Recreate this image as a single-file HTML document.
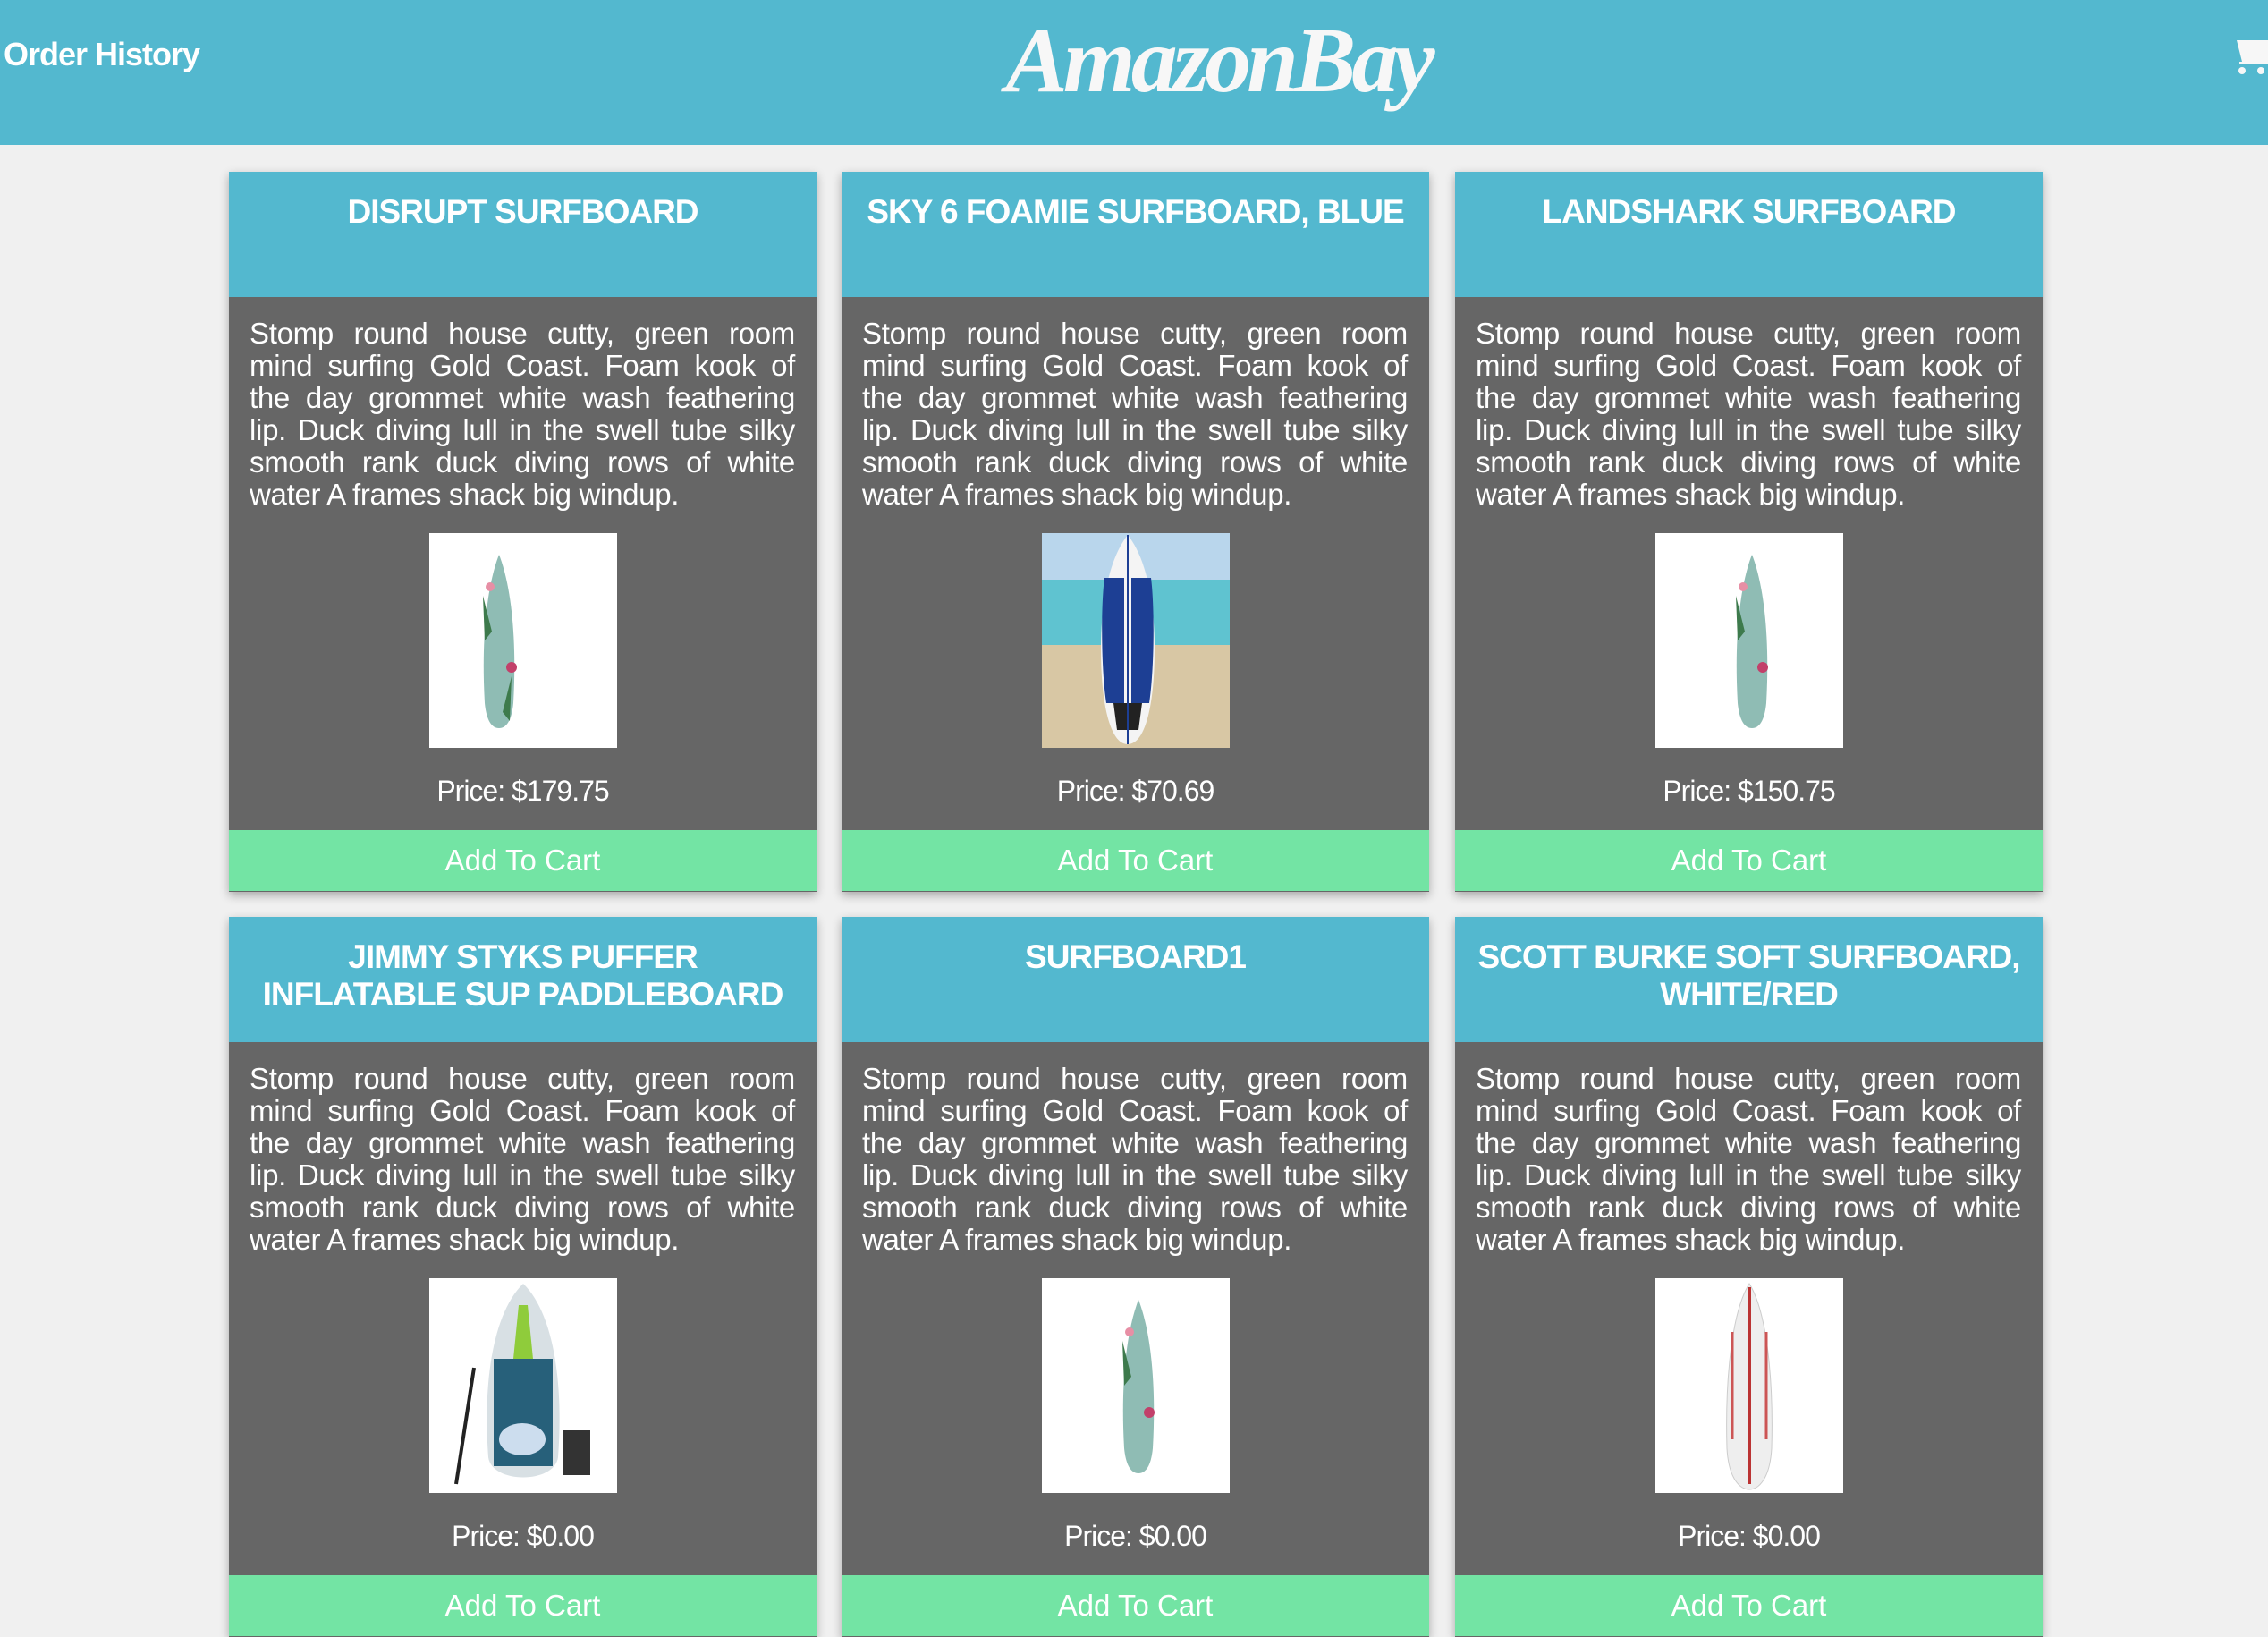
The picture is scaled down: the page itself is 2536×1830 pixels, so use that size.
<!DOCTYPE html>
<html><head><meta charset="utf-8"><style>
*{margin:0;padding:0;box-sizing:border-box}
body{width:2536px;height:1692px;overflow:hidden;background:#f0f0f0;font-family:"Liberation Sans",sans-serif;position:relative}
.hdr{position:absolute;left:0;top:0;width:2536px;height:162px;background:#53b8cf}
.oh{position:absolute;left:4px;top:40px;color:#fff;font-weight:bold;font-size:36px;letter-spacing:-1px}
.logo{position:absolute;left:1100px;top:8px;width:524px;text-align:center;color:#f7f7f7;font-family:"Liberation Serif",serif;font-style:italic;font-weight:bold;font-size:104px;letter-spacing:-5px}
.card{position:absolute;width:657px;height:805px;background:#666;box-shadow:0 4px 10px rgba(0,0,0,.3)}
.t{height:140px;background:#53b8cf;color:#fff;font-weight:bold;font-size:37px;text-align:center;padding:24px 0 0;line-height:42px;letter-spacing:-1px;white-space:nowrap}
.d{color:#fff;font-size:33px;line-height:36px;text-align:justify;padding:23px 24px 0 23px;height:264px;letter-spacing:-0.3px}
.im{display:block;margin:0 auto;width:210px;height:240px;background:#fff}
.p{color:#fff;font-size:32px;text-align:center;margin-top:30px;height:62px;letter-spacing:-1px}
.b{height:68px;background:#73e4a4;color:#fff;font-size:33px;text-align:center;line-height:68px}
</style></head><body>
<div class="hdr">
<div class="oh">Order History</div>
<div class="logo">AmazonBay</div>
<svg style="position:absolute;left:2488px;top:42px" width="48" height="44" viewBox="0 0 48 44"><path d="M3 3h10l6 24h29v-4H22L18 9h30V3" fill="#f7f7f7"/><path d="M16 6h32v17l-26 4z" fill="#f7f7f7"/><rect x="16" y="27" width="32" height="3" fill="#f7f7f7"/><circle cx="19" cy="37" r="4" fill="#f7f7f7"/><circle cx="40" cy="37" r="4" fill="#f7f7f7"/></svg>
</div>

<div class="card" style="left:256px;top:192px"><div class="t">DISRUPT SURFBOARD</div><div class="d">Stomp round house cutty, green room mind surfing Gold Coast. Foam kook of the day grommet white wash feathering lip. Duck diving lull in the swell tube silky smooth rank duck diving rows of white water A frames shack big windup.</div>
<svg class="im" viewBox="0 0 210 240"><rect width="210" height="240" fill="#fff"/><path d="M78 24C64 60 58 120 62 190C64 210 70 218 78 218C86 218 92 210 94 190C98 120 92 60 78 24z" fill="#8fbcb4"/><circle cx="68" cy="60" r="5" fill="#e78fa5"/><circle cx="92" cy="150" r="6" fill="#c2406a"/><path d="M60 70l10 40-8 10z" fill="#3d7a4c"/><path d="M92 160l-10 40 8 10z" fill="#3d7a4c"/></svg>
<div class="p">Price: $179.75</div><div class="b">Add To Cart</div></div>

<div class="card" style="left:941px;top:192px"><div class="t">SKY 6 FOAMIE SURFBOARD, BLUE</div><div class="d">Stomp round house cutty, green room mind surfing Gold Coast. Foam kook of the day grommet white wash feathering lip. Duck diving lull in the swell tube silky smooth rank duck diving rows of white water A frames shack big windup.</div>
<svg class="im" viewBox="0 0 210 240"><rect width="210" height="60" fill="#b9d6ec"/><rect y="52" width="210" height="75" fill="#5fc3d0"/><rect y="125" width="210" height="115" fill="#d8c7a4"/><path d="M96 2C74 30 66 80 66 130C66 190 76 236 96 236C116 236 126 190 126 130C126 80 118 30 96 2z" fill="#f4f4f4"/><path d="M70 50C66 80 66 150 72 190L92 190V50zM122 50C126 80 126 150 120 190L100 190V50z" fill="#1d3f94"/><path d="M80 190h32l-4 30h-24z" fill="#222"/><rect x="95" y="2" width="2" height="234" fill="#1d3f94"/></svg>
<div class="p">Price: $70.69</div><div class="b">Add To Cart</div></div>

<div class="card" style="left:1627px;top:192px"><div class="t">LANDSHARK SURFBOARD</div><div class="d">Stomp round house cutty, green room mind surfing Gold Coast. Foam kook of the day grommet white wash feathering lip. Duck diving lull in the swell tube silky smooth rank duck diving rows of white water A frames shack big windup.</div>
<svg class="im" viewBox="0 0 210 240"><rect width="210" height="240" fill="#fff"/><path d="M108 24C94 60 88 120 92 190C94 210 100 218 108 218C116 218 122 210 124 190C128 120 122 60 108 24z" fill="#8fbcb4"/><circle cx="98" cy="60" r="5" fill="#e78fa5"/><circle cx="120" cy="150" r="6" fill="#c2406a"/><path d="M90 70l10 40-8 10z" fill="#3d7a4c"/></svg>
<div class="p">Price: $150.75</div><div class="b">Add To Cart</div></div>

<div class="card" style="left:256px;top:1025px"><div class="t">JIMMY STYKS PUFFER<br>INFLATABLE SUP PADDLEBOARD</div><div class="d">Stomp round house cutty, green room mind surfing Gold Coast. Foam kook of the day grommet white wash feathering lip. Duck diving lull in the swell tube silky smooth rank duck diving rows of white water A frames shack big windup.</div>
<svg class="im" viewBox="0 0 210 240"><rect width="210" height="240" fill="#fff"/><path d="M105 6C70 40 60 120 66 200C70 230 140 230 144 200C150 120 140 40 105 6z" fill="#d8e0e4"/><path d="M100 30L92 110h26L110 30z" fill="#8fcc3b"/><path d="M72 90h66v120H72z" fill="#27607a"/><ellipse cx="104" cy="180" rx="26" ry="18" fill="#cde"/><path d="M50 100L30 230" stroke="#222" stroke-width="4"/><rect x="150" y="170" width="30" height="50" fill="#333"/></svg>
<div class="p">Price: $0.00</div><div class="b">Add To Cart</div></div>

<div class="card" style="left:941px;top:1025px"><div class="t">SURFBOARD1</div><div class="d">Stomp round house cutty, green room mind surfing Gold Coast. Foam kook of the day grommet white wash feathering lip. Duck diving lull in the swell tube silky smooth rank duck diving rows of white water A frames shack big windup.</div>
<svg class="im" viewBox="0 0 210 240"><rect width="210" height="240" fill="#fff"/><path d="M108 24C94 60 88 120 92 190C94 210 100 218 108 218C116 218 122 210 124 190C128 120 122 60 108 24z" fill="#8fbcb4"/><circle cx="98" cy="60" r="5" fill="#e78fa5"/><circle cx="120" cy="150" r="6" fill="#c2406a"/><path d="M90 70l10 40-8 10z" fill="#3d7a4c"/></svg>
<div class="p">Price: $0.00</div><div class="b">Add To Cart</div></div>

<div class="card" style="left:1627px;top:1025px"><div class="t">SCOTT BURKE SOFT SURFBOARD,<br>WHITE/RED</div><div class="d">Stomp round house cutty, green room mind surfing Gold Coast. Foam kook of the day grommet white wash feathering lip. Duck diving lull in the swell tube silky smooth rank duck diving rows of white water A frames shack big windup.</div>
<svg class="im" viewBox="0 0 210 240"><rect width="210" height="240" fill="#fff"/><path d="M105 6C84 40 78 120 80 190C82 225 95 236 105 236C115 236 128 225 130 190C132 120 126 40 105 6z" fill="#eee" stroke="#ccc"/><rect x="103" y="10" width="4" height="220" fill="#b33"/><path d="M86 60v120M124 60v120" stroke="#c55" stroke-width="3"/></svg>
<div class="p">Price: $0.00</div><div class="b">Add To Cart</div></div>
</body></html>
